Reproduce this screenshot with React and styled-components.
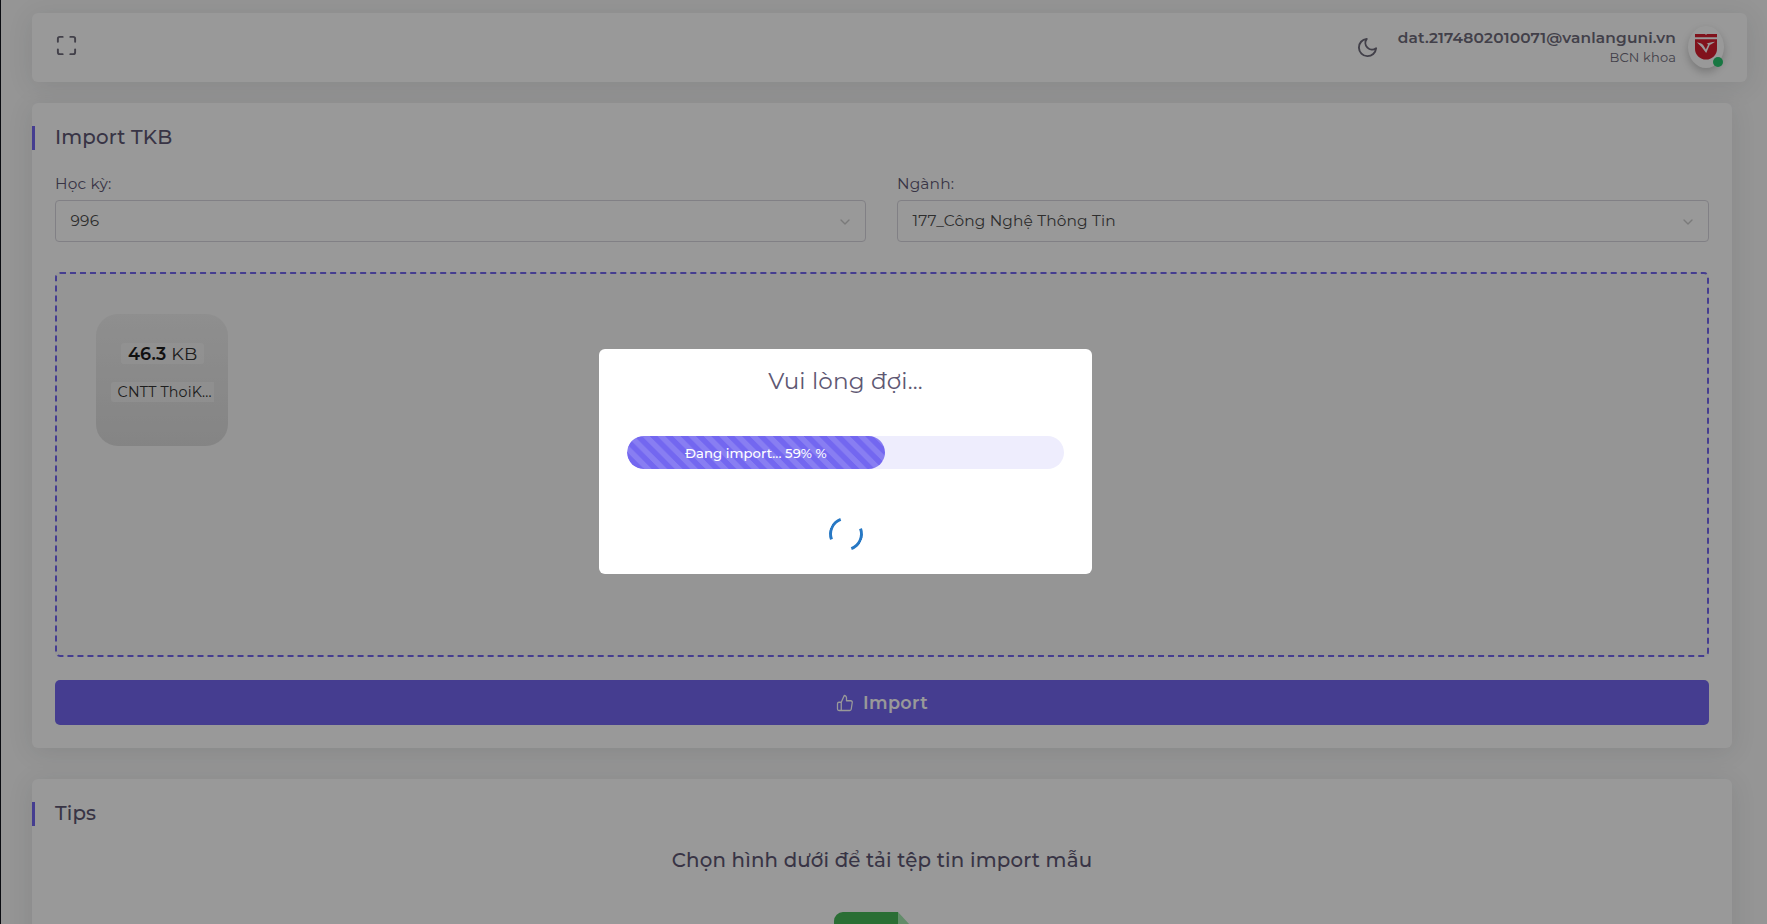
import React from 'react';
import styled, { createGlobalStyle } from 'styled-components';
import { FiMaximize, FiMoon, FiChevronDown, FiThumbsUp } from 'react-icons/fi';

const GlobalStyle = createGlobalStyle`
  *, *::before, *::after { box-sizing: border-box; }
  html, body { margin: 0; height: 100%; overflow: hidden; }
  body {
    background: #f8f8f8;
    color: #6e6b7b;
    font-family: Montserrat, Inter, "Noto Sans", sans-serif;
    font-size: 15.4px;
    line-height: 1.45;
    letter-spacing: 0.154px;
  }
`;

const Page = styled.div`
  height: 924px;
  padding: 13px 20px 0 32px;
  overflow: hidden;
`;

const Navbar = styled.header`
  display: flex;
  align-items: center;
  height: 69px;
  padding: 0 23px;
  background: #fff;
  border-radius: 6px;
  box-shadow: 0 4px 26px rgba(34, 41, 47, 0.1);
  color: #6e6b7b;
`;

const FullscreenIcon = styled(FiMaximize)`
  width: 23px;
  height: 23px;
  margin-bottom: 4px;
`;

const NavActions = styled.div`
  display: flex;
  align-items: center;
  margin-left: auto;
`;

const MoonIcon = styled(FiMoon)`
  width: 23px;
  height: 23px;
  margin: 0 19px 0 0;
`;

const User = styled.div`
  display: flex;
  flex-direction: column;
  align-items: flex-end;
  margin-right: 12px;
`;

const UserName = styled.span`
  height: 20px;
  font-weight: 600;
  line-height: 20px;
`;

const UserRole = styled.span`
  height: 19px;
  font-size: 13px;
  line-height: 19px;
`;

const Avatar = styled.div`
  position: relative;
  display: grid;
  place-items: center;
  width: 36px;
  height: 42px;
  margin-top: -1px;
  background: #fff;
  border-radius: 50%;
  box-shadow: 0 4px 9px rgba(0, 0, 0, 0.22);
`;

const OnlineDot = styled.span`
  position: absolute;
  right: 1px;
  bottom: 1px;
  width: 10px;
  height: 10px;
  background: #28c76f;
  border-radius: 50%;
`;

const Card = styled.section`
  width: 1700px;
  height: ${(p) => p.$height}px;
  margin-top: ${(p) => p.$gap}px;
  padding-top: 23px;
  background: #fff;
  border-radius: 6px;
  box-shadow: 0 4px 26px rgba(34, 41, 47, 0.1);
`;

const CardTitle = styled.h4`
  height: 24px;
  margin: 0;
  padding-left: 20px;
  border-left: 3px solid #7367f0;
  color: #5e5873;
  font-size: 19.8px;
  font-weight: 500;
  line-height: 22px;
`;

const CardBody = styled.div`
  display: flex;
  flex-direction: column;
  padding: 23px 23px 0;
`;

const Fields = styled.div`
  display: grid;
  grid-template-columns: 811px 812px;
  gap: 31px;
`;

const Label = styled.label`
  display: block;
  height: 27px;
  color: #5e5873;
  line-height: 22px;
`;

const Select = styled.div`
  display: flex;
  align-items: center;
  justify-content: space-between;
  height: 42px;
  padding: 0 12px 0 14.6px;
  border: 1px solid #d8d6de;
  border-radius: 4px;
  color: #4d4d4d;
`;

const Chevron = styled(FiChevronDown)`
  width: 16px;
  height: 16px;
  margin-top: 2px;
  color: #ccc;
`;

const Dropzone = styled.div`
  height: 385px;
  margin-top: 30px;
  padding: 40px 39px;
  background: #f8f8f8;
  border: 2px dashed #7367f0;
  border-radius: 5px;
`;

const FileTile = styled.div`
  display: flex;
  flex-direction: column;
  align-items: flex-start;
  width: 132px;
  height: 132px;
  padding-top: 29px;
  background: linear-gradient(#eee, #ddd);
  border-radius: 22px;
  color: #333;
`;

const FileSize = styled.div`
  width: 83px;
  height: 21px;
  margin-left: 25px;
  padding-left: 7px;
  background: rgba(255, 255, 255, 0.4);
  border-radius: 3px;
  font-size: 17.6px;
  line-height: 22px;
  white-space: pre;
`;

const SizeValue = styled.strong`
  color: #1c1c1c;
  font-weight: 600;
`;

const FileName = styled.div`
  width: 103px;
  height: 20px;
  margin: 18px 0 0 15px;
  padding-left: 6.6px;
  background: rgba(255, 255, 255, 0.4);
  border-radius: 3px 0 0 3px;
  font-size: 14.3px;
  line-height: 20px;
  white-space: nowrap;
`;

const ImportButton = styled.button`
  display: flex;
  align-items: center;
  justify-content: center;
  gap: 9px;
  height: 45px;
  margin-top: 23px;
  padding: 0;
  background: #7367f0;
  border: 0;
  border-radius: 5px;
  color: #fff;
  font-family: inherit;
  font-size: 17.6px;
  font-weight: 600;
  letter-spacing: 0.4px;
`;

const LikeIcon = styled(FiThumbsUp)`
  width: 18px;
  height: 18px;
  stroke-width: 1.7;
`;

const TemplateHint = styled.h4`
  align-self: center;
  height: 24px;
  margin: 0;
  color: #5e5873;
  font-size: 19.8px;
  font-weight: 500;
  line-height: 22px;
  letter-spacing: 0.18px;
`;

const SheetLink = styled.div`
  align-self: flex-start;
  margin: 39px 0 0 779px;
  line-height: 0;
`;

const Overlay = styled.div`
  position: fixed;
  inset: 0;
  padding-left: 598px;
  display: flex;
  align-items: center;
  background: rgba(0, 0, 0, 0.4);
  border-left: 1px solid #0b0d12;
`;

const Dialog = styled.div`
  display: flex;
  flex-direction: column;
  align-items: center;
  width: 493px;
  height: 225px;
  margin-top: -1px;
  background: #fff;
  border-radius: 6px;
`;

const DialogTitle = styled.h2`
  margin: 16px 0 0;
  color: #5e5873;
  font-size: 23.1px;
  font-weight: 400;
  line-height: 32px;
`;

const ProgressTrack = styled.div`
  width: 437px;
  height: 33px;
  margin-top: 39px;
  background: #eeedfd;
  border-radius: 17px;
  overflow: hidden;
`;

const ProgressBar = styled.div`
  width: 59%;
  height: 100%;
  padding-top: 1px;
  background-color: #7367f0;
  background-image: linear-gradient(
    45deg,
    rgba(255, 255, 255, 0.15) 25%,
    transparent 25%,
    transparent 50%,
    rgba(255, 255, 255, 0.15) 50%,
    rgba(255, 255, 255, 0.15) 75%,
    transparent 75%,
    transparent
  );
  background-size: 15.4px 15.4px;
  border-radius: 17px;
  color: #fff;
  font-size: 13.2px;
  font-weight: 500;
  line-height: 32px;
  text-align: center;
  letter-spacing: 0.05px;
`;

const Spinner = styled.div`
  width: 34px;
  height: 34px;
  margin-top: 48px;
  border: 3px solid;
  border-color: #2778c4 transparent;
  border-radius: 50%;
  transform: rotate(-65deg);
`;

const Crest = () => (
  <svg width="22" height="26" viewBox="0 0 22 26">
    <path d="M0 0h22v3.2H0zM0 5.2h22V15a11 10.6 0 0 1-22 0z" fill="#d81e30" />
    <path d="M10 0h2l-1 1z" fill="#fff" />
    <path
      d="M1.8 8.2C4.5 8.6 7 9.4 8.3 11.2l2.6 4.4 2.3-5.2-1.6-.6C13.8 8.6 17 8 20.2 7.8l-4.4 2.6-1 .4-3.6 8.2L6.6 13z"
      fill="#fff"
    />
  </svg>
);

const Sheet = () => (
  <svg width="88" height="110" viewBox="0 0 88 110">
    <path d="M9 0h55v31h24v79H0V9a9 9 0 0 1 9-9z" fill="#46b758" />
    <path d="M64 0l24 26v5H64z" fill="#a3e9af" />
  </svg>
);

export default function App() {
  return (
    <>
      <GlobalStyle />
      <Page>
        <Navbar>
          <FullscreenIcon />
          <NavActions>
            <MoonIcon />
            <User>
              <UserName>dat.2174802010071@vanlanguni.vn</UserName>
              <UserRole>BCN khoa</UserRole>
            </User>
            <Avatar>
              <Crest />
              <OnlineDot />
            </Avatar>
          </NavActions>
        </Navbar>

        <Card $height={645} $gap={21}>
          <CardTitle>Import TKB</CardTitle>
          <CardBody>
            <Fields>
              <div>
                <Label>Học kỳ:</Label>
                <Select>
                  996
                  <Chevron />
                </Select>
              </div>
              <div>
                <Label>Ngành:</Label>
                <Select>
                  177_Công Nghệ Thông Tin
                  <Chevron />
                </Select>
              </div>
            </Fields>
            <Dropzone>
              <FileTile>
                <FileSize>
                  <SizeValue>46.3</SizeValue> KB
                </FileSize>
                <FileName>CNTT ThoiK...</FileName>
              </FileTile>
            </Dropzone>
            <ImportButton>
              <LikeIcon />
              Import
            </ImportButton>
          </CardBody>
        </Card>

        <Card $height={400} $gap={31}>
          <CardTitle>Tips</CardTitle>
          <CardBody>
            <TemplateHint>Chọn hình dưới để tải tệp tin import mẫu</TemplateHint>
            <SheetLink>
              <Sheet />
            </SheetLink>
          </CardBody>
        </Card>
      </Page>

      <Overlay>
        <Dialog>
          <DialogTitle>Vui lòng đợi...</DialogTitle>
          <ProgressTrack>
            <ProgressBar>Đang import... 59% %</ProgressBar>
          </ProgressTrack>
          <Spinner />
        </Dialog>
      </Overlay>
    </>
  );
}
